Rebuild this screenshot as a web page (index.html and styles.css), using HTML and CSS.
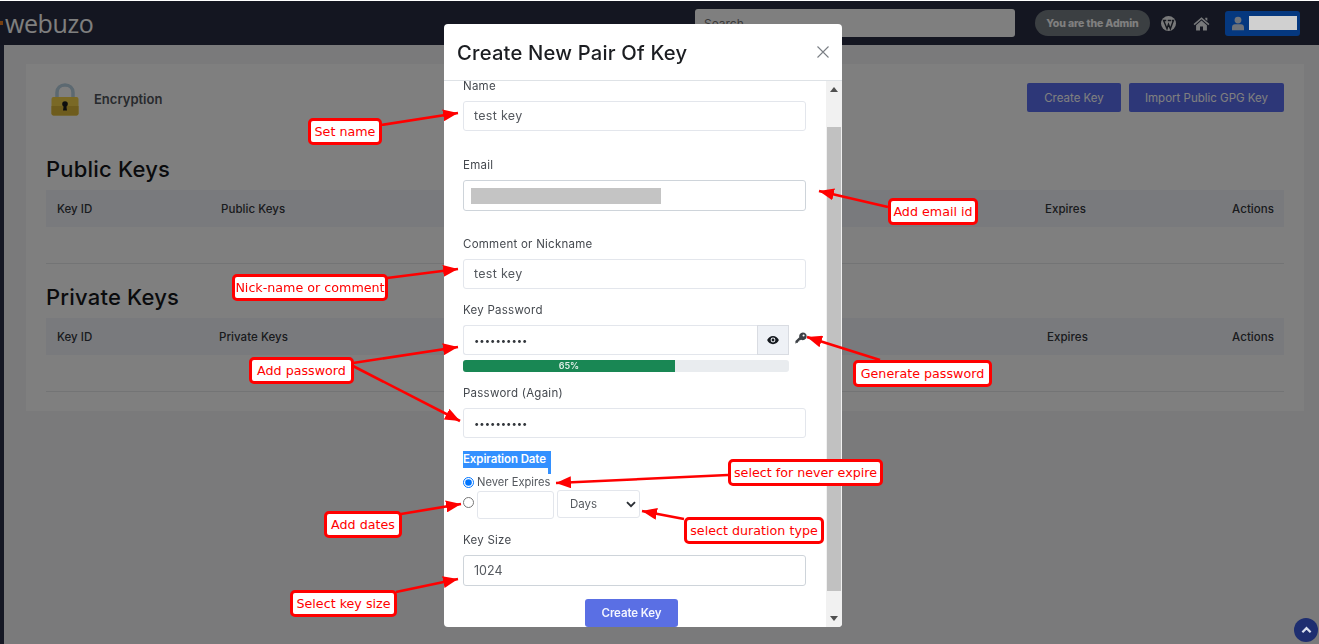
FILE: index.html
```html
<!DOCTYPE html>
<html lang="en">
<head>
<meta charset="utf-8">
<title>Encryption - Webuzo</title>
<link rel="stylesheet" href="styles.css">
</head>
<body>
<div class="page">
  <header class="topbar">
    <div class="brand"><span class="brand-mark"></span><span class="brand-name">webuzo</span></div>
    <div class="top-tools">
      <input class="search" type="text" placeholder="Search...">
      <span class="admin-pill">You are the Admin</span>
      <svg class="wp-icon" viewBox="0 0 20 20"><circle cx="10" cy="10" r="10" fill="#f2f3f5"/><path d="M3.500 6 8 17 10 11 12.500 17 16.500 6M2.500 6H7M9 6H13.500M14.500 6H17.500" fill="none" stroke="#2a2f3c" stroke-width="1.900"/></svg>
      <svg class="home-icon" viewBox="0 0 20 18"><path d="M0.500 9.500 10 1.500 19.500 9.500 18.300 11 10 4 1.700 11Z" fill="#eef0f4"/><path d="M3.500 11 10 5.500 16.500 11V17.500H11.800V12.500H8.200V17.500H3.500Z" fill="#eef0f4"/><path d="M14.500 2H17V6L14.500 4Z" fill="#eef0f4"/></svg>
      <div class="user-btn">
        <svg class="user-icon" viewBox="0 0 14 16"><circle cx="7" cy="4" r="4" fill="#dfe6f2"/><path d="M0 16V12.500C0 10.500 1.500 9 3.500 9H10.500C12.500 9 14 10.500 14 12.500V16Z" fill="#dfe6f2"/></svg>
      </div>
    </div>
  </header>
  <main class="content">
    <section class="card">
      <div class="card-head">
        <div class="card-title">
          <svg class="lock-icon" viewBox="0 0 28 33"><path d="M6 15V9.500C6 5 9.500 2 14 2S22 5 22 9.500V15" fill="none" stroke="#b9d2e2" stroke-width="3.500"/><rect x="0.500" y="14" width="27" height="18.500" rx="2" fill="#f4d24c"/><path d="M0.500 23H27.500V30.500C27.500 31.600 26.600 32.500 25.500 32.500H2.500C1.400 32.500 0.500 31.600 0.500 30.500Z" fill="#dcb93a"/><circle cx="14" cy="21" r="2.800" fill="#1d1d1d"/><path d="M12.800 22H15.200L16 27.500H12Z" fill="#1d1d1d"/></svg>
          <span class="card-name">Encryption</span>
        </div>
        <div class="card-actions">
          <button class="btn btn-create" type="button">Create Key</button>
          <button class="btn btn-import" type="button">Import Public GPG Key</button>
        </div>
      </div>
      <h2 class="sec-title">Public Keys</h2>
      <div class="key-table key-table-public">
        <div class="key-row key-row-head"><span>Key ID</span><span>Public Keys</span><span>Expires</span><span class="cell-end">Actions</span></div>
        <div class="key-row-empty"></div>
      </div>
      <h2 class="sec-title sec-private">Private Keys</h2>
      <div class="key-table key-table-private">
        <div class="key-row key-row-head"><span>Key ID</span><span>Private Keys</span><span>Expires</span><span class="cell-end">Actions</span></div>
        <div class="key-row-empty"></div>
      </div>
    </section>
  </main>
</div>

<div class="backdrop"></div>

<div class="modal">
  <div class="modal-head">
    <h1 class="modal-title">Create New Pair Of Key</h1>
    <svg class="modal-close" viewBox="0 0 12 12"><path d="M0.500 0.500 11.500 11.500M11.500 0.500 0.500 11.500" stroke="#7b7f85" stroke-width="1.100" fill="none"/></svg>
  </div>
  <div class="modal-body">
    <form class="form">
      <div class="group group-first group-wide">
        <label class="label">Name</label>
        <input class="input" type="text" value="test key">
      </div>
      <div class="group group-wide2">
        <label class="label">Email</label>
        <div class="input input-tall input-dark"><span class="redact"></span></div>
      </div>
      <div class="group">
        <label class="label">Comment or Nickname</label>
        <input class="input" type="text" value="test key">
      </div>
      <div class="group">
        <label class="label">Key Password</label>
        <div class="pass-row">
          <input class="input input-pass input-secret" type="password" value="1234567890">
          <span class="eye-btn"><svg class="eye-icon" viewBox="0 0 16 12"><path d="M8 0.500C4.500 0.500 1.500 2.800 0.200 6 1.500 9.200 4.500 11.500 8 11.500S14.500 9.200 15.800 6C14.500 2.800 11.500 0.500 8 0.500Z" fill="#15191f"/><circle cx="8" cy="6" r="3.200" fill="#eef1f6"/><circle cx="8" cy="6" r="1.900" fill="#15191f"/></svg></span>
          <svg class="key-icon" viewBox="0 0 14 14"><path d="M9 0.500A4.500 4.500 0 1 1 7 9L6 9.500 5 9.500V11H3.500V12.500H2L1 13.500H0.500V10.500L5 6A4.500 4.500 0 0 1 9 0.500Z" fill="#3d4146"/><circle cx="10" cy="4" r="1.200" fill="#fff"/></svg>
        </div>
        <div class="meter"><div class="meter-fill">65%</div></div>
      </div>
      <div class="group group-again">
        <label class="label">Password (Again)</label>
        <input class="input input-secret" type="password" value="1234567890">
      </div>
      <div class="expire">
        <div class="expire-label"><span class="expire-sel">Expiration Date</span></div>
        <label class="radio-row"><input class="radio" type="radio" name="exp" checked><span class="radio-text">Never Expires</span></label>
        <div class="date-row">
          <input class="radio radio-date" type="radio" name="exp">
          <input class="input input-num" type="text">
          <div class="select-wrap">
            <select class="select"><option>Days</option><option>Weeks</option><option>Months</option></select>
            <svg class="chevron" viewBox="0 0 10 7"><path d="M1 1.200 5 5.200 9 1.200" fill="none" stroke="#2b2f35" stroke-width="1.900"/></svg>
          </div>
        </div>
      </div>
      <div class="group group-size">
        <label class="label">Key Size</label>
        <div class="input input-tall input-dark input-static">1024</div>
      </div>
      <div class="form-foot"><button class="btn-submit" type="button">Create Key</button></div>
    </form>
    <div class="scrollbar">
      <svg class="sb-arrow" viewBox="0 0 8 5"><path d="M4 0 8 5H0Z" fill="#505050"/></svg>
      <div class="sb-track"><div class="sb-thumb"></div></div>
      <svg class="sb-arrow" viewBox="0 0 8 5"><path d="M0 0H8L4 5Z" fill="#505050"/></svg>
    </div>
  </div>
</div>

<div class="scroll-top"><svg class="scroll-top-icon" viewBox="0 0 12 8"><path d="M1.500 6.500 6 2 10.500 6.500" fill="none" stroke="#d9dfee" stroke-width="2.400"/></svg></div>

<div class="redact-user"></div>

<svg class="arrows" viewBox="0 0 1319 644">
  <defs>
    <marker id="head" markerUnits="userSpaceOnUse" markerWidth="16" markerHeight="12" refX="15" refY="6" orient="auto"><path d="M0 0 15 6 0 12Z" fill="#ff0000"/></marker>
  </defs>
  <g class="arrow-lines">
    <line marker-end="url(#head)" x1="381" y1="125" x2="458" y2="113"/>
    <line marker-end="url(#head)" x1="888" y1="207" x2="819" y2="191"/>
    <line marker-end="url(#head)" x1="387" y1="278" x2="458" y2="269"/>
    <line marker-end="url(#head)" x1="353" y1="363" x2="458" y2="347"/>
    <line marker-end="url(#head)" x1="353" y1="366" x2="460" y2="421"/>
    <line marker-end="url(#head)" x1="880" y1="360" x2="807" y2="337"/>
    <line marker-end="url(#head)" x1="728" y1="475" x2="556" y2="483"/>
    <line marker-end="url(#head)" x1="401" y1="514" x2="461" y2="504"/>
    <line marker-end="url(#head)" x1="684" y1="519" x2="642" y2="511"/>
    <line marker-end="url(#head)" x1="396" y1="592" x2="458" y2="579"/>
  </g>
</svg>

<div class="note note-name">Set name</div>
<div class="note note-email">Add email id</div>
<div class="note note-nick">Nick-name or comment</div>
<div class="note note-pass">Add password</div>
<div class="note note-gen">Generate password</div>
<div class="note note-never">select for never expire</div>
<div class="note note-dates">Add dates</div>
<div class="note note-type">select duration type</div>
<div class="note note-size">Select key size</div>
</body>
</html>
```
FILE: styles.css
```css
* { box-sizing: border-box; }
html, body { margin: 0; height: 100%; }
body {
  background: #fff;
  font-family: Inter, "Open Sans", sans-serif;
  color: #32363c;
  overflow: hidden;
  padding-top: 1px;
}
.page { height: 643px; display: flex; flex-direction: column; background: #2a3049; }
.topbar {
  height: 44px;
  background: #282d42;
  display: flex;
  align-items: center;
  justify-content: space-between;
  flex: none;
}
.brand { display: flex; align-items: center; gap: 2px; }
.brand-mark { width: 3px; height: 4px; background: #f08020; }
.brand-name { font: 400 25px "Open Sans", sans-serif; color: #fff; letter-spacing: -0.4px; line-height: 40px; }
.top-tools { display: flex; align-items: center; padding-right: 19px; }
.search {
  width: 320px; height: 28px; border: 0; border-radius: 3px; background: #fff;
  padding: 0 9px; font: 12px Inter, sans-serif; margin-right: 20px;
}
.admin-pill {
  width: 115px; height: 26px; border-radius: 13px; background: #777e85; color: #fff;
  font-size: 10.500px; font-weight: 800; display: flex; align-items: center; justify-content: center;
  letter-spacing: -0.1px; margin-right: 11px;
}
.wp-icon { width: 15px; height: 15px; margin-right: 17px; }
.home-icon { width: 17px; height: 15px; margin-right: 15px; }
.user-btn {
  width: 75px; height: 25px; background: #0a70ff; border-radius: 3px;
  display: flex; align-items: center; padding-left: 7px;
}
.user-icon { width: 12px; height: 15px; }

.content { flex: 1; background: #f4f5f7; margin-left: 4px; padding: 19px 15px 0 22px; }
.card { background: #fff; height: 347px; padding: 19px 20px 0 20px; }
.card-head { display: flex; justify-content: space-between; height: 71px; }
.card-title { display: flex; align-items: flex-start; gap: 15px; padding-left: 5px; }
.lock-icon { width: 28px; height: 33px; }
.card-name { font-size: 13px; font-weight: 600; color: #50545b; line-height: 33px; }
.card-actions { display: flex; gap: 8px; align-items: flex-start; }
.btn {
  height: 29px; border: 0; border-radius: 2px; background: #5b6ef0; color: #fff;
  font: 400 11.500px Inter, sans-serif;
}
.btn-create { width: 94px; }
.btn-import { width: 155px; }
.sec-title { margin: 0; font-size: 22px; font-weight: 500; line-height: 30px; color: #15171b; height: 36px; letter-spacing: 0.2px; }
.sec-private { margin-top: 18px; }
.key-row { display: grid; height: 37px; align-items: center; padding: 0 10px 0 11px; background: #f2f5fb; font-size: 11.500px; font-weight: 500; color: #32363c; letter-spacing: 0.05px; }
.key-table-public .key-row { grid-template-columns: 164px 824px 1fr 60px; }
.key-table-private .key-row { grid-template-columns: 162px 828px 1fr 60px; }
.cell-end { text-align: right; }
.key-row-empty { height: 37px; border-bottom: 1px solid #e6e8eb; }

.backdrop { position: fixed; left: 0; right: 0; top: 1px; bottom: 0; background: rgba(0, 0, 0, 0.5); }

.modal {
  position: fixed; left: 444px; top: 24px; width: 398px; height: 603px;
  background: #fff; border-radius: 4px; display: flex; flex-direction: column; overflow: hidden;
}
.modal-head {
  height: 57px; flex: none; border-bottom: 1px solid #dee2e6;
  display: flex; align-items: center; justify-content: space-between; padding: 0 13px 0 13px;
}
.modal-title { margin: 0; font-size: 20.200px; font-weight: 500; color: #1b1d21; letter-spacing: 0.2px; }
.modal-close { width: 12px; height: 12px; }
.modal-body { flex: 1; display: flex; min-height: 0; }
.form { flex: 1; padding: 0 20px 0 19px; min-width: 0; }
.label { display: block; height: 20px; line-height: 20px; font-size: 11.500px; font-weight: 400; color: #45494f; margin-bottom: 5px; letter-spacing: 0.25px; }
.group { margin-bottom: 11px; }
.group-first .label { height: 10px; line-height: 10px; margin-bottom: 10px; }
.group-wide { margin-bottom: 24px; }
.group-wide2 { margin-bottom: 23px; }
.group-again { margin-bottom: 13px; }
.input {
  display: block; width: 100%; height: 30px; border: 1px solid #e3e6ec; border-radius: 3px;
  background: #fff; padding: 0 10px 2px; font: 12.500px Inter, sans-serif; color: #55595f; outline: 0;
  letter-spacing: 0.3px;
}
.input-secret { font-size: 9.500px; letter-spacing: 0; padding-bottom: 0; color: #33373c; }
.input-tall { height: 31px; padding-bottom: 0; }
.input-dark { border-color: #ced4da; }
.input-static { line-height: 29px; letter-spacing: 0; }
.redact { display: block; width: 190px; height: 16px; margin: 7px 0 0 -3px; background: #c4c4c4; }
.pass-row { display: flex; align-items: center; }
.input-pass { width: 294px; flex: none; border-radius: 3px 0 0 3px; border-right: 0; }
.eye-btn {
  width: 32px; height: 30px; flex: none; background: #eef1f6; border: 1px solid #d9dce2;
  display: flex; align-items: center; justify-content: center;
}
.eye-icon { width: 12px; height: 10px; }
.key-icon { width: 12px; height: 12px; margin: -4px 0 0 6px; flex: none; }
.meter { width: 326px; height: 12px; margin-top: 5px; background: #e9ecef; border-radius: 3px; overflow: hidden; }
.meter-fill { width: 65%; height: 100%; background: #198754; color: #dfeee6; font-size: 9px; font-weight: 600; line-height: 12px; text-align: center; }
.expire-label { height: 24px; position: relative; }
.expire-sel { display: block; width: 88px; height: 17px; background: #3390ff; color: #fff; font-size: 11.500px; font-weight: 600; line-height: 17px; white-space: nowrap; letter-spacing: -0.1px; }
.expire-label::after { content: ""; position: absolute; left: 85px; top: 17px; width: 3px; height: 6px; background: #3390ff; }
.radio-row { display: flex; align-items: center; height: 14px; }
.radio { width: 11px; height: 11px; margin: 0 3px 0 0; flex: none; }
.radio-text { font-size: 11.200px; color: #55595f; }
.date-row { display: flex; height: 30px; margin-top: 1px; align-items: flex-start; }
.radio-date { margin-top: 7px; }
.input-num { width: 77px; height: 28px; margin-top: 1px; }
.select-wrap { position: relative; width: 83px; height: 28px; margin-left: 3px; }
.select {
  appearance: none; width: 100%; height: 100%; border: 1px solid #e3e6ec; border-radius: 3px;
  background: #fff; padding: 0 12px; font: 11.500px Inter, sans-serif; color: #55595f; outline: 0;
}
.chevron { position: absolute; right: 4px; top: 11px; width: 10px; height: 7px; }
.group-size { margin-top: 10px; margin-bottom: 13px; }
.form-foot { display: flex; justify-content: center; padding-right: 6px; }
.btn-submit {
  width: 93px; height: 28px; border: 0; border-radius: 3px; background: #5a6fe4; color: #f3f5ff;
  font: 600 11.500px Inter, sans-serif; letter-spacing: -0.1px;
}
.scrollbar { width: 16px; flex: none; background: #f1f1f1; display: flex; flex-direction: column; align-items: center; }
.sb-arrow { width: 8px; height: 5px; margin: 6px 0; flex: none; }
.sb-track { flex: 1; width: 100%; padding: 29px 1px 19px 1px; }
.sb-thumb { height: 100%; background: #c1c1c1; width: 14px; }

.scroll-top {
  position: fixed; right: 1px; bottom: 2px; width: 24px; height: 24px; border-radius: 50%;
  background: #1e2e70; display: flex; align-items: center; justify-content: center;
}
.scroll-top-icon { width: 11px; height: 8px; }
.redact-user { position: fixed; left: 1249px; top: 16px; width: 48px; height: 14px; background: #d0d0d0; }

.arrows { position: fixed; left: 0; top: 0; width: 1319px; height: 644px; pointer-events: none; }
.arrow-lines line { stroke: #ff0000; stroke-width: 2.600; }
.note {
  position: fixed; height: 27px; background: #fff; border: 3px solid #ff0000; border-radius: 5px;
  color: #ff0000; font: 12.700px/21px "DejaVu Sans", sans-serif; display: flex; align-items: center; justify-content: center;
  white-space: nowrap;
}
.note-name { left: 308px; top: 118px; width: 74px; }
.note-email { left: 888px; top: 198px; width: 90px; }
.note-nick { left: 232px; top: 274px; width: 156px; }
.note-pass { left: 249px; top: 357px; width: 105px; }
.note-gen { left: 853px; top: 360px; width: 139px; }
.note-never { left: 728px; top: 459px; width: 155px; }
.note-dates { left: 324px; top: 511px; width: 78px; }
.note-type { left: 684px; top: 517px; width: 140px; }
.note-size { left: 290px; top: 590px; width: 107px; }
```
